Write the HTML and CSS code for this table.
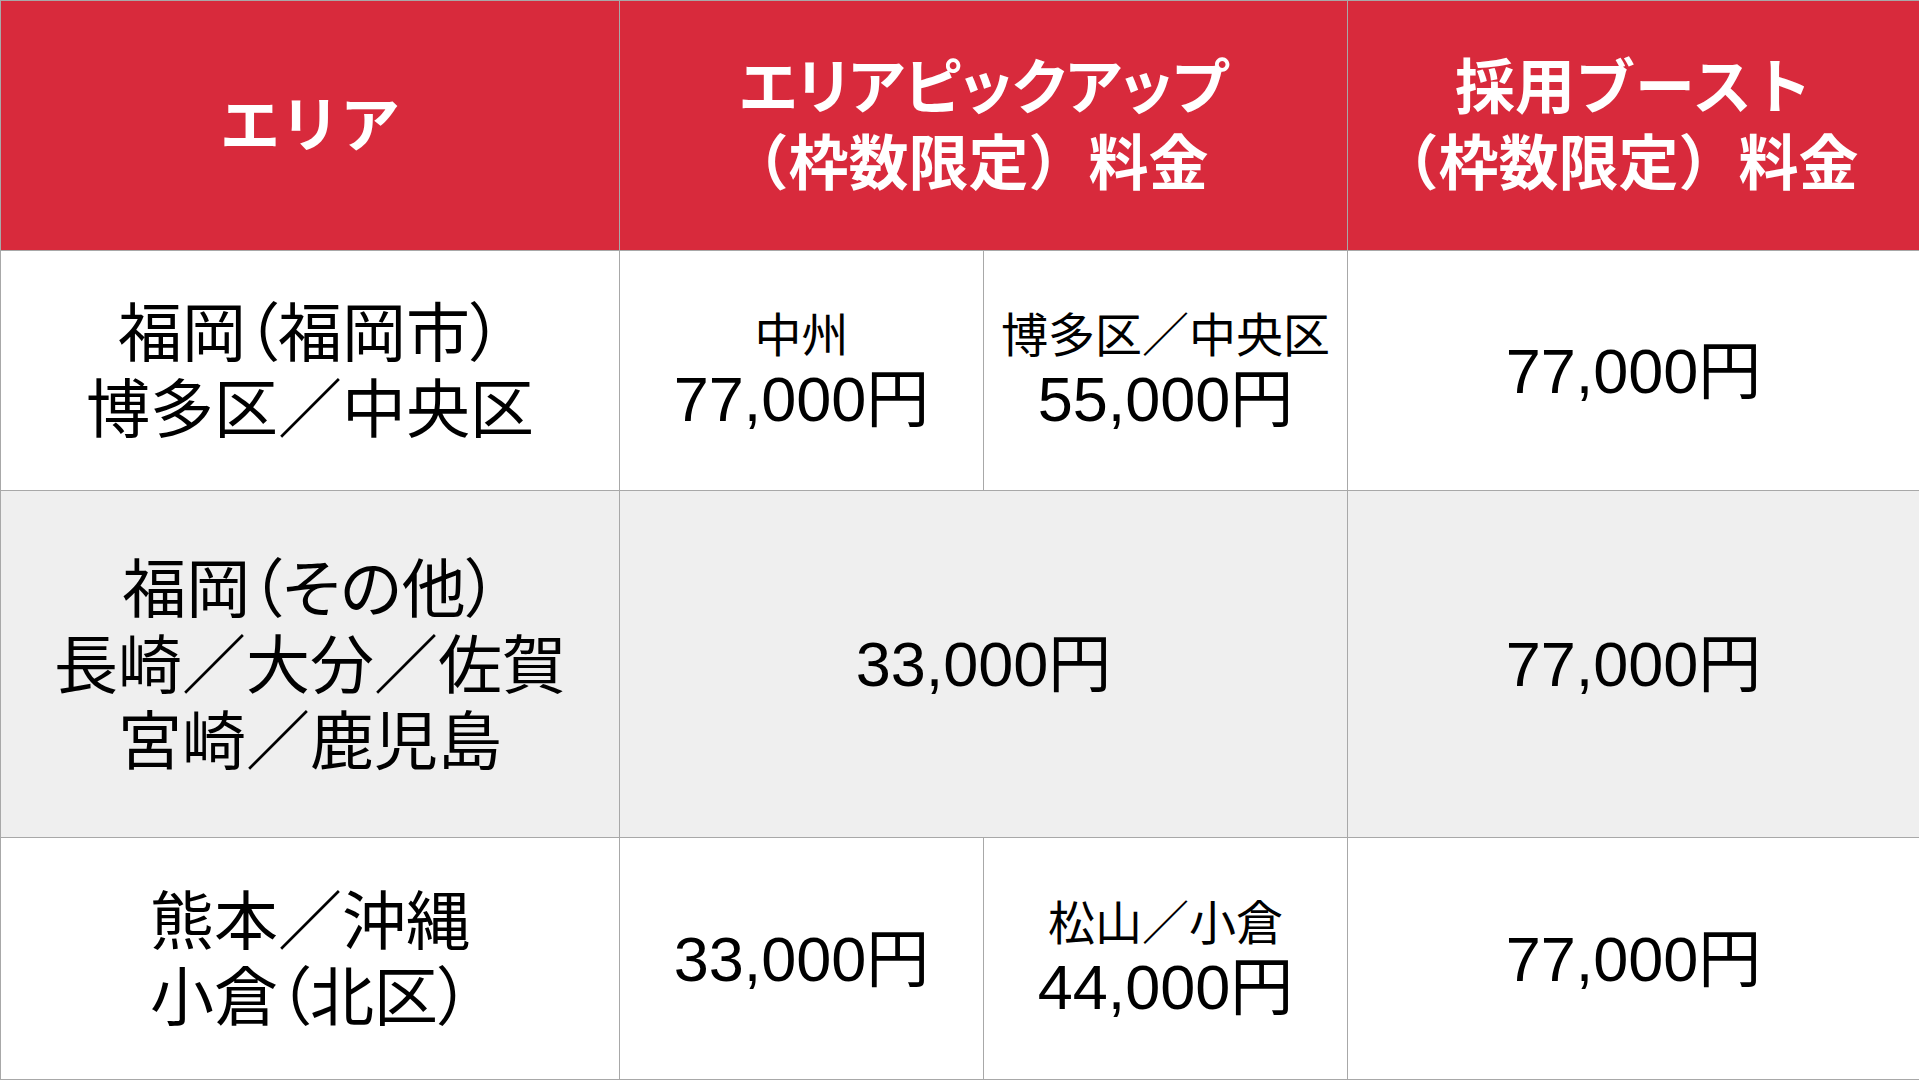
FILE: index.html
```html
<!DOCTYPE html>
<html lang="ja">
<head>
<meta charset="utf-8">
<title>料金表</title>
<link rel="stylesheet" href="styles.css">
</head>
<body>
<div class="table">
  <div class="cell head">エリア</div>
  <div class="cell head span2"><span class="prop">エリアピックアップ</span><span>（枠数限定）料金</span></div>
  <div class="cell head last"><span>採用ブースト</span><span>（枠数限定）料金</span></div>

  <div class="cell area"><span>福岡（福岡市）</span><span>博多区／中央区</span></div>
  <div class="cell price"><span class="label">中州</span><span class="yen">77,000円</span></div>
  <div class="cell price"><span class="label">博多区／中央区</span><span class="yen">55,000円</span></div>
  <div class="cell price last"><span class="yen">77,000円</span></div>

  <div class="cell area alt"><span>福岡（その他）</span><span>長崎／大分／佐賀</span><span>宮崎／鹿児島</span></div>
  <div class="cell price alt span2"><span class="yen">33,000円</span></div>
  <div class="cell price alt last"><span class="yen">77,000円</span></div>

  <div class="cell area"><span>熊本／沖縄</span><span>小倉（北区）</span></div>
  <div class="cell price"><span class="yen">33,000円</span></div>
  <div class="cell price"><span class="label">松山／小倉</span><span class="yen">44,000円</span></div>
  <div class="cell price last"><span class="yen">77,000円</span></div>
</div>
</body>
</html>
```

FILE: styles.css
```css
html, body {
  margin: 0;
  padding: 0;
  background: #ffffff;
}

.table {
  display: grid;
  grid-template-columns: 619px 364px 364px 571px;
  grid-template-rows: 250px 240px 347px 242px;
  width: 1919px;
  height: 1080px;
  box-sizing: border-box;
  border-top: 1px solid #a8a8a8;
  border-left: 1px solid #a8a8a8;
  font-family: "Liberation Sans", "Noto Sans CJK JP", sans-serif;
  color: #000000;
}

.cell {
  box-sizing: border-box;
  border-right: 1px solid #a8a8a8;
  border-bottom: 1px solid #a8a8a8;
  display: flex;
  flex-direction: column;
  align-items: center;
  justify-content: center;
  text-align: center;
  background: #ffffff;
}

.cell.last {
  border-right: none;
}

.span2 {
  grid-column: span 2;
}

.head {
  background: #d82a3c;
  color: #ffffff;
  font-weight: 700;
  font-size: 60px;
  line-height: 76px;
  padding-top: 3px;
  text-spacing-trim: trim-start;
}

.head .prop {
  font-feature-settings: "palt";
}

.area {
  font-size: 64px;
  line-height: 76px;
  padding-top: 3px;
  font-feature-settings: "palt";
}

.area span,
.head span,
.price span {
  display: block;
  white-space: nowrap;
}

.alt {
  background: #efefef;
}

.label {
  font-family: "Noto Sans CJK JP", sans-serif;
  font-size: 47px;
  line-height: 56px;
}

.yen {
  font-family: "Liberation Sans", "Noto Sans CJK JP", sans-serif;
  font-size: 63px;
  line-height: 78px;
}
```
